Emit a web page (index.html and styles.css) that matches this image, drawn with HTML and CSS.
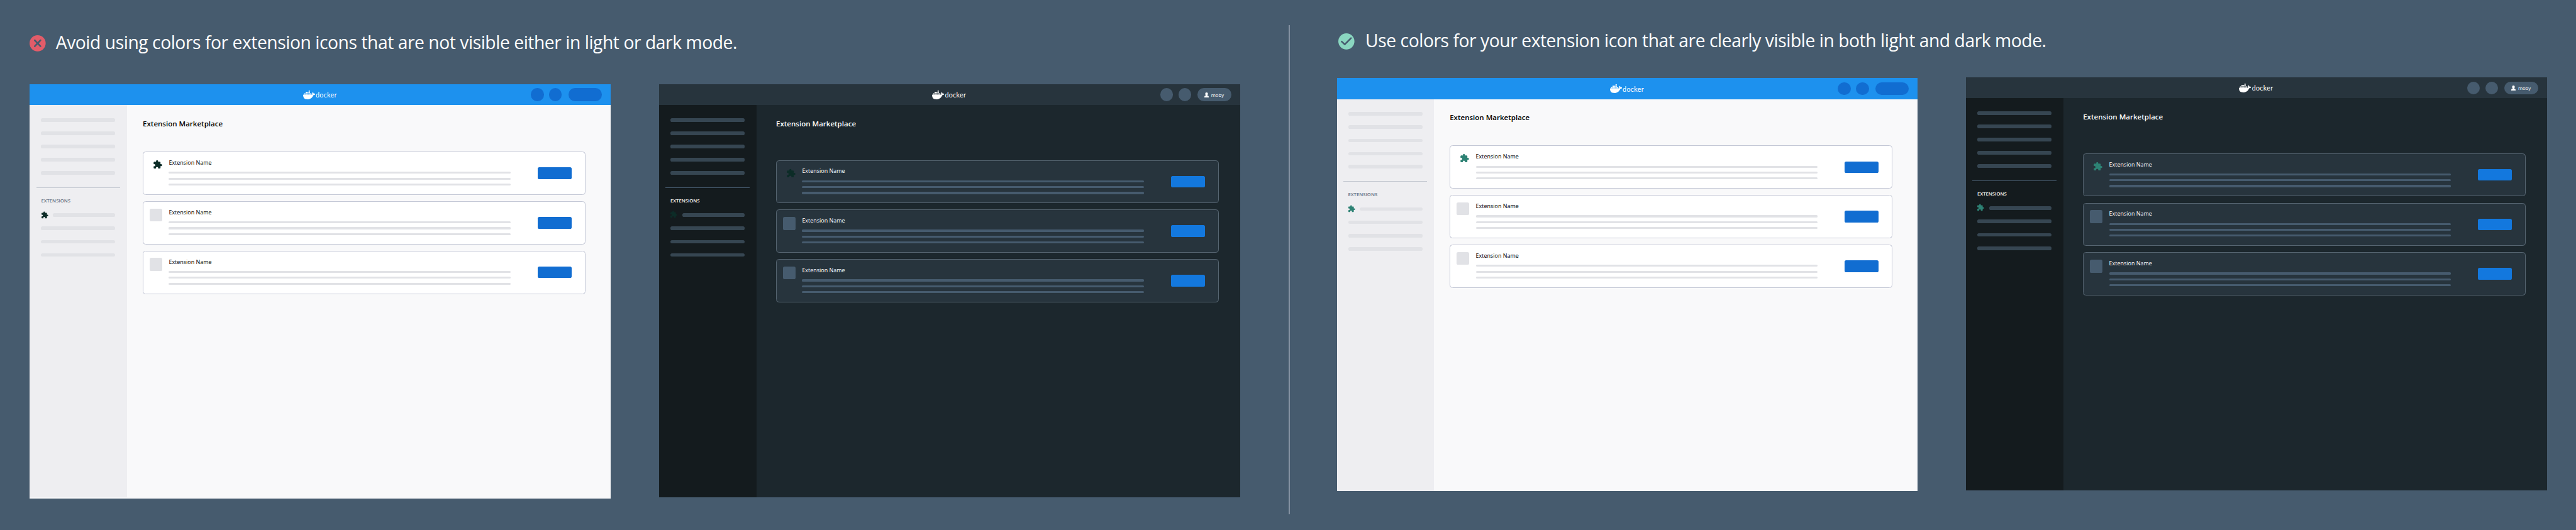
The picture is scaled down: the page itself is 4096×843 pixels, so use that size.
FILE: index.html
```html
<!DOCTYPE html>
<html lang="en">
<head>
<meta charset="utf-8">
<title>Extension icon colors</title>
<link rel="stylesheet" href="styles.css">
</head>
<body>
<svg class="sprite" aria-hidden="true">
  <symbol id="whale" viewBox="0 3.39 24 17.3"><path d="M13.983 11.078h2.119a.186.186 0 00.186-.185V9.006a.186.186 0 00-.186-.186h-2.119a.185.185 0 00-.185.185v1.888c0 .102.083.185.185.185m-2.954-5.43h2.118a.186.186 0 00.186-.186V3.574a.186.186 0 00-.186-.185h-2.118a.185.185 0 00-.185.185v1.888c0 .102.082.185.185.185m0 2.716h2.118a.187.187 0 00.186-.186V6.29a.186.186 0 00-.186-.185h-2.118a.185.185 0 00-.185.185v1.887c0 .102.082.185.185.186m-2.93 0h2.12a.186.186 0 00.184-.186V6.29a.185.185 0 00-.185-.185H8.1a.185.185 0 00-.185.185v1.887c0 .102.083.185.185.186m-2.964 0h2.119a.186.186 0 00.185-.186V6.29a.185.185 0 00-.185-.185H5.136a.186.186 0 00-.186.185v1.887c0 .102.084.185.186.186m5.893 2.715h2.118a.186.186 0 00.186-.185V9.006a.186.186 0 00-.186-.186h-2.118a.185.185 0 00-.185.185v1.888c0 .102.082.185.185.185m-2.93 0h2.12a.185.185 0 00.184-.185V9.006a.185.185 0 00-.184-.186h-2.12a.185.185 0 00-.184.185v1.888c0 .102.083.185.185.185m-2.964 0h2.119a.185.185 0 00.185-.185V9.006a.185.185 0 00-.184-.186h-2.12a.186.186 0 00-.186.186v1.887c0 .102.084.185.186.185m-2.92 0h2.12a.185.185 0 00.184-.185V9.006a.185.185 0 00-.184-.186h-2.12a.185.185 0 00-.184.185v1.888c0 .102.082.185.185.185M23.763 9.89c-.065-.051-.672-.51-1.954-.51-.338.001-.676.03-1.01.087-.248-1.7-1.653-2.53-1.716-2.566l-.344-.199-.226.327c-.284.438-.49.922-.612 1.43-.23.97-.09 1.882.403 2.661-.595.332-1.55.413-1.744.42H.751a.751.751 0 00-.75.748 11.376 11.376 0 00.692 4.062c.545 1.428 1.355 2.48 2.41 3.124 1.18.723 3.1 1.137 5.275 1.137.983.003 1.963-.086 2.93-.266a12.248 12.248 0 003.823-1.389c.98-.567 1.86-1.288 2.61-2.136 1.252-1.418 1.998-2.997 2.553-4.4h.221c1.372 0 2.215-.549 2.68-1.009.309-.293.55-.65.707-1.046l.098-.288Z"/></symbol>
  <symbol id="puzzle" viewBox="0 0 24 24"><path d="M20.5 11H19V7c0-1.1-.9-2-2-2h-4V3.500a2.500 2.500 0 0 0-5 0V5H4c-1.100 0-2 .9-2 2v3.800h1.500c1.500 0 2.700 1.200 2.700 2.700S5 16.200 3.500 16.200H2V20c0 1.100.9 2 2 2h3.800v-1.500c0-1.500 1.200-2.700 2.700-2.700s2.700 1.200 2.700 2.700V22H17c1.100 0 2-.9 2-2v-4h1.500a2.500 2.500 0 0 0 0-5z"/></symbol>
  <symbol id="person" viewBox="0 0 11 13"><circle cx="5.500" cy="3.400" r="3.400"/><path d="M3.700 5.500h3.600v2c2 .5 3.700 1.800 3.700 3.500v2H0v-2c0-1.700 1.700-3 3.700-3.500z"/></symbol>
</svg>

<main class="board">
  <section class="example example-avoid">
    <h1 class="rule">
      <svg class="rule-icon" viewBox="0 0 40 40"><circle class="bad" cx="20" cy="20" r="20"/><path class="mark" d="M12.800 12.500l14.400 15M27.200 12.500l-14.400 15"/></svg>
      <span class="rule-text">Avoid using colors for extension icons that are not visible either in light or dark mode.</span>
    </h1>
    <div class="windows">
      <article class="window light tall icon-dark">
        <header class="topbar">
          <div class="logo"><svg class="whale"><use href="#whale"/></svg><span class="wordmark">docker</span></div>
          <div class="controls"><i class="dot"></i><i class="dot"></i><i class="account"></i></div>
        </header>
        <div class="body">
          <nav class="sidebar">
            <i class="bar"></i><i class="bar"></i><i class="bar"></i><i class="bar"></i><i class="bar"></i>
            <hr class="divider">
            <h3 class="label">EXTENSIONS</h3>
            <div class="entry"><svg class="puzzle"><use href="#puzzle"/></svg><i class="bar"></i></div>
            <i class="bar"></i><i class="bar"></i><i class="bar"></i>
          </nav>
          <div class="content">
            <h2 class="title">Extension Marketplace</h2>
            <div class="card"><div class="slot"><svg class="puzzle"><use href="#puzzle"/></svg></div><div class="info"><p class="name">Extension Name</p><i class="line"></i><i class="line"></i><i class="line"></i></div><i class="button"></i></div>
            <div class="card"><div class="slot filled"></div><div class="info"><p class="name">Extension Name</p><i class="line"></i><i class="line"></i><i class="line"></i></div><i class="button"></i></div>
            <div class="card"><div class="slot filled"></div><div class="info"><p class="name">Extension Name</p><i class="line"></i><i class="line"></i><i class="line"></i></div><i class="button"></i></div>
          </div>
        </div>
      </article>
      <article class="window dark icon-dark">
        <header class="topbar">
          <div class="logo"><svg class="whale"><use href="#whale"/></svg><span class="wordmark">docker</span></div>
          <div class="controls"><i class="dot"></i><i class="dot"></i><div class="account"><svg class="person"><use href="#person"/></svg><span class="user">moby</span></div></div>
        </header>
        <div class="body">
          <nav class="sidebar">
            <i class="bar"></i><i class="bar"></i><i class="bar"></i><i class="bar"></i><i class="bar"></i>
            <hr class="divider">
            <h3 class="label">EXTENSIONS</h3>
            <div class="entry"><svg class="puzzle"><use href="#puzzle"/></svg><i class="bar"></i></div>
            <i class="bar"></i><i class="bar"></i><i class="bar"></i>
          </nav>
          <div class="content">
            <h2 class="title">Extension Marketplace</h2>
            <div class="card"><div class="slot"><svg class="puzzle"><use href="#puzzle"/></svg></div><div class="info"><p class="name">Extension Name</p><i class="line"></i><i class="line"></i><i class="line"></i></div><i class="button"></i></div>
            <div class="card"><div class="slot filled"></div><div class="info"><p class="name">Extension Name</p><i class="line"></i><i class="line"></i><i class="line"></i></div><i class="button"></i></div>
            <div class="card"><div class="slot filled"></div><div class="info"><p class="name">Extension Name</p><i class="line"></i><i class="line"></i><i class="line"></i></div><i class="button"></i></div>
          </div>
        </div>
      </article>
    </div>
  </section>

  <div class="separator"></div>

  <section class="example example-use">
    <h1 class="rule">
      <svg class="rule-icon" viewBox="0 0 40 40"><circle class="good" cx="20" cy="20" r="20"/><path class="mark" d="M8.500 20.500l7.500 7L31.500 12"/></svg>
      <span class="rule-text">Use colors for your extension icon that are clearly visible in both light and dark mode.</span>
    </h1>
    <div class="windows">
      <article class="window light icon-green">
        <header class="topbar">
          <div class="logo"><svg class="whale"><use href="#whale"/></svg><span class="wordmark">docker</span></div>
          <div class="controls"><i class="dot"></i><i class="dot"></i><i class="account"></i></div>
        </header>
        <div class="body">
          <nav class="sidebar">
            <i class="bar"></i><i class="bar"></i><i class="bar"></i><i class="bar"></i><i class="bar"></i>
            <hr class="divider">
            <h3 class="label">EXTENSIONS</h3>
            <div class="entry"><svg class="puzzle"><use href="#puzzle"/></svg><i class="bar"></i></div>
            <i class="bar"></i><i class="bar"></i><i class="bar"></i>
          </nav>
          <div class="content">
            <h2 class="title">Extension Marketplace</h2>
            <div class="card"><div class="slot"><svg class="puzzle"><use href="#puzzle"/></svg></div><div class="info"><p class="name">Extension Name</p><i class="line"></i><i class="line"></i><i class="line"></i></div><i class="button"></i></div>
            <div class="card"><div class="slot filled"></div><div class="info"><p class="name">Extension Name</p><i class="line"></i><i class="line"></i><i class="line"></i></div><i class="button"></i></div>
            <div class="card"><div class="slot filled"></div><div class="info"><p class="name">Extension Name</p><i class="line"></i><i class="line"></i><i class="line"></i></div><i class="button"></i></div>
          </div>
        </div>
      </article>
      <article class="window dark icon-green">
        <header class="topbar">
          <div class="logo"><svg class="whale"><use href="#whale"/></svg><span class="wordmark">docker</span></div>
          <div class="controls"><i class="dot"></i><i class="dot"></i><div class="account"><svg class="person"><use href="#person"/></svg><span class="user">moby</span></div></div>
        </header>
        <div class="body">
          <nav class="sidebar">
            <i class="bar"></i><i class="bar"></i><i class="bar"></i><i class="bar"></i><i class="bar"></i>
            <hr class="divider">
            <h3 class="label">EXTENSIONS</h3>
            <div class="entry"><svg class="puzzle"><use href="#puzzle"/></svg><i class="bar"></i></div>
            <i class="bar"></i><i class="bar"></i><i class="bar"></i>
          </nav>
          <div class="content">
            <h2 class="title">Extension Marketplace</h2>
            <div class="card"><div class="slot"><svg class="puzzle"><use href="#puzzle"/></svg></div><div class="info"><p class="name">Extension Name</p><i class="line"></i><i class="line"></i><i class="line"></i></div><i class="button"></i></div>
            <div class="card"><div class="slot filled"></div><div class="info"><p class="name">Extension Name</p><i class="line"></i><i class="line"></i><i class="line"></i></div><i class="button"></i></div>
            <div class="card"><div class="slot filled"></div><div class="info"><p class="name">Extension Name</p><i class="line"></i><i class="line"></i><i class="line"></i></div><i class="button"></i></div>
          </div>
        </div>
      </article>
    </div>
  </section>
</main>
</body>
</html>
```
FILE: styles.css
```css
/* The board is 63.86rem wide and always fills the window. */
html { font-size: calc(100vw / 63.86); }
* { box-sizing: border-box; margin: 0; padding: 0; }
body { background: #465b6e; font-family: "Open Sans", "Noto Sans", sans-serif; overflow: hidden; }
i { display: block; }
svg { display: block; flex: none; fill: currentColor; }
.sprite { position: absolute; width: 0; height: 0; }

.board { display: flex; height: 13.15rem; }
.example { flex: none; }
.example-avoid { width: 31.95rem; padding: .88rem 0 0 .74rem; }
.example-use { padding: .825rem 0 0 1.17rem; }
.separator { flex: none; width: .02rem; height: 12.12rem; margin-top: .63rem; background: #8491a1; }

.rule { display: flex; height: .4rem; color: #fff; font-size: .44rem; font-weight: 400; line-height: .4rem; letter-spacing: -.0067rem; white-space: nowrap; }
.rule-icon { width: .4rem; height: .4rem; }
.bad { fill: #e25c69; }
.good { fill: #8ad6c0; }
.mark { fill: none; stroke: #465b6e; stroke-width: 4; stroke-linecap: round; stroke-linejoin: round; }
.rule-text { margin: -.025rem 0 0 .244rem; }
.example-use .rule-icon { margin-left: .04rem; }
.example-use .rule-text { margin: -.01rem 0 0 .27rem; }

.windows { display: flex; gap: 1.2rem; align-items: flex-start; margin-top: .81rem; }
.example-use .windows { margin-top: .695rem; }
.example-use .light { margin-top: .02rem; }

.window { display: flex; flex-direction: column; width: 14.4rem; height: 10.24rem; background: var(--page); }
.tall { height: 10.28rem; }
.tall .body { margin-bottom: .04rem; }
.light {
  --page: #f9f9fa; --top: #1d91ee; --control: #116dd1; --side: #eeeef1; --bar: #e1e2e6; --rule: #c4c8d1;
  --label: #677285; --text: #000; --card: #fff; --edge: #c4c8d6; --line: #e1e2e6; --button: #116dd1;
}
.dark {
  --page: #1c272d; --top: #27343d; --control: #465b6e; --side: #141b1e; --bar: #364652; --rule: #465b6e;
  --label: #fff; --text: #fff; --card: #27343d; --edge: #566571; --line: #465b6e; --button: #1378de;
}
.icon-dark { --icon: #0c2c27; }
.icon-green { --icon: #2d8274; }

.topbar { display: flex; flex: none; align-items: center; justify-content: space-between; height: .52rem; padding: 0 .22rem 0 6.77rem; background: var(--top); color: #fff; }
.logo { display: flex; align-items: center; }
.whale { width: .303rem; height: .218rem; }
.wordmark { margin-left: .013rem; padding-top: .03rem; font: 400 .168rem/.2rem Lato, sans-serif; letter-spacing: .0045rem; }
.controls { display: flex; gap: .13rem; }
.dot { width: .32rem; height: .32rem; border-radius: 50%; background: var(--control); }
.account { display: flex; align-items: center; gap: .065rem; width: .83rem; height: .32rem; margin-left: .03rem; padding-left: .16rem; border-radius: .16rem; background: var(--control); }
.person { width: .11rem; height: .13rem; }
.user { font-size: .12rem; line-height: .16rem; }

.body { display: flex; flex: 1; }
.sidebar { width: 2.41rem; padding: .32rem .29rem 0 .28rem; background: var(--side); }
.bar { width: 1.84rem; height: .09rem; margin-bottom: .24rem; border-radius: .04rem; background: var(--bar); }
.bar:nth-of-type(4) { margin-bottom: .23rem; }
.bar:nth-of-type(5) { margin-bottom: .31rem; }
.divider { width: 2.08rem; height: .01rem; margin-left: -.12rem; border: 0; background: var(--rule); }
.label { margin-top: .249rem; color: var(--label); font-size: .12rem; font-weight: 600; line-height: .16rem; }
.entry { display: flex; align-items: center; justify-content: space-between; height: .19rem; margin: .181rem 0 .19rem; }
.entry .bar { width: 1.55rem; margin: 0; }
.entry .puzzle { width: .19rem; height: .19rem; margin-left: -.01rem; }
.dark .entry .puzzle { margin: -.04rem 0 0 -.02rem; }
.puzzle { color: var(--icon); }

.content { padding: .334rem 0 0 .39rem; }
.title { height: .24rem; margin-bottom: .576rem; color: var(--text); font-size: .18rem; font-weight: 600; line-height: .24rem; }
.dark .content { padding-left: .49rem; }
.dark .title { margin-bottom: .786rem; }
.card { display: flex; width: 10.975rem; height: 1.07rem; margin-bottom: .16rem; padding: 0 .33rem 0 .15rem; border: 1px solid var(--edge); border-radius: .07rem; background: var(--card); }
.slot { width: .32rem; height: .32rem; margin-top: .165rem; border-radius: .04rem; }
.filled { background: var(--line); }
.slot .puzzle { width: .24rem; height: .24rem; margin: .015rem 0 0 .08rem; }
.dark .slot .puzzle { margin-top: .035rem; }
.info { width: 8.48rem; margin: .17rem 0 0 .16rem; }
.name { margin-bottom: .114rem; color: var(--text); font-size: .14rem; line-height: .2rem; }
.line { height: .05rem; margin-bottom: .096rem; border-radius: .025rem; background: var(--line); }
.button { width: .84rem; height: .29rem; margin: auto 0 auto auto; border-radius: .04rem; background: var(--button); }
```
